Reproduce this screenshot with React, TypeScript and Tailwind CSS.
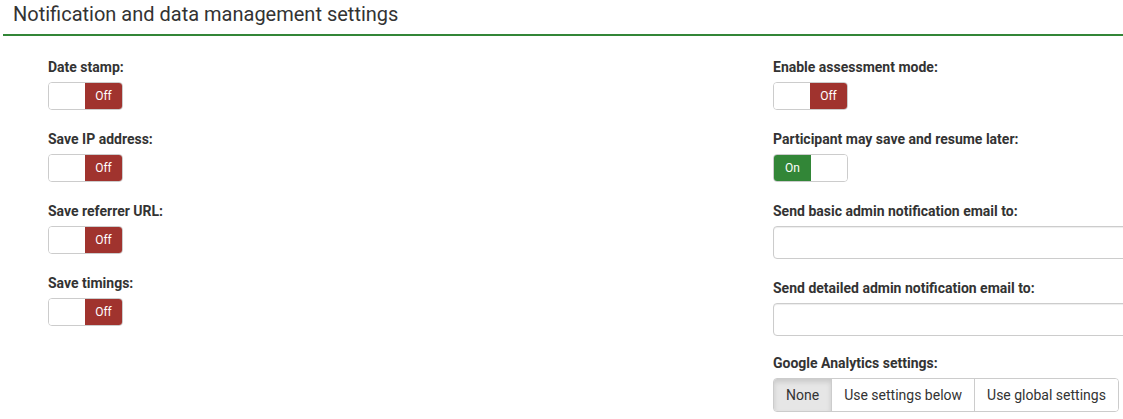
import { useState } from 'react';

function Toggle({ on }: { on: boolean }) {
  return (
    <div className="flex h-[28px] w-[75px] overflow-hidden rounded-[4px] border border-[#cccccc] bg-white text-[12px] text-white">
      {on ? (
        <>
          <div className="flex w-[37px] items-center justify-center bg-[#328637]">On</div>
          <div className="flex-1 bg-white" />
        </>
      ) : (
        <>
          <div className="flex-1 bg-white" />
          <div className="flex w-[37px] items-center justify-center bg-[#a0332e]">Off</div>
        </>
      )}
    </div>
  );
}

function Field({ label, children }: { label: string; children: React.ReactNode }) {
  return (
    <div className="mb-[19px]">
      <div className="mb-[5px] h-[20px] text-[14px] font-bold leading-[20px] text-[#333333]">{label}</div>
      {children}
    </div>
  );
}

export default function App() {
  const [ga, setGa] = useState('None');
  const gaOptions = ['None', 'Use settings below', 'Use global settings'];

  return (
    <div className="h-[419px] w-[1123px] overflow-hidden bg-white font-['Roboto',sans-serif] text-[#333333]">
      {/* Header */}
      <div className="ml-[3px] border-b-2 border-[#328637] pb-[8px] pl-[10px] pt-[2px]">
        <h2 className="text-[20px] leading-[24px] font-normal text-[#333333]">Notification and data management settings</h2>
      </div>

      <div className="flex pt-[21px]">
        {/* Left column */}
        <div className="w-[773px] shrink-0 pl-[48px]">
          <Field label="Date stamp:">
            <Toggle on={false} />
          </Field>
          <Field label="Save IP address:">
            <Toggle on={false} />
          </Field>
          <Field label="Save referrer URL:">
            <Toggle on={false} />
          </Field>
          <Field label="Save timings:">
            <Toggle on={false} />
          </Field>
        </div>

        {/* Right column */}
        <div className="w-[400px] shrink-0">
          <Field label="Enable assessment mode:">
            <Toggle on={false} />
          </Field>
          <Field label="Participant may save and resume later:">
            <Toggle on={true} />
          </Field>
          <Field label="Send basic admin notification email to:">
            <input
              type="text"
              className="block h-[33px] w-[400px] rounded-[4px] border border-[#cccccc] bg-white px-3 text-[14px] shadow-[inset_0_1px_1px_rgba(0,0,0,0.075)] outline-none"
            />
          </Field>
          <Field label="Send detailed admin notification email to:">
            <input
              type="text"
              className="block h-[33px] w-[400px] rounded-[4px] border border-[#cccccc] bg-white px-3 text-[14px] shadow-[inset_0_1px_1px_rgba(0,0,0,0.075)] outline-none"
            />
          </Field>
          <div className="-mt-[2px]">
            <div className="mb-[5px] h-[20px] text-[14px] font-bold leading-[20px] text-[#333333]">Google Analytics settings:</div>
            <div className="inline-flex h-[34px] overflow-hidden rounded-[4px] border border-[#cccccc] text-[14px] text-[#333333]">
              {gaOptions.map((opt, i) => (
                <button
                  key={opt}
                  onClick={() => setGa(opt)}
                  className={`px-[12px] ${i > 0 ? 'border-l border-[#cccccc]' : ''} ${
                    ga === opt ? 'bg-[#e6e6e6] shadow-[inset_0_3px_5px_rgba(0,0,0,0.125)]' : 'bg-white'
                  }`}
                >
                  {opt}
                </button>
              ))}
            </div>
          </div>
        </div>
      </div>
    </div>
  );
}
